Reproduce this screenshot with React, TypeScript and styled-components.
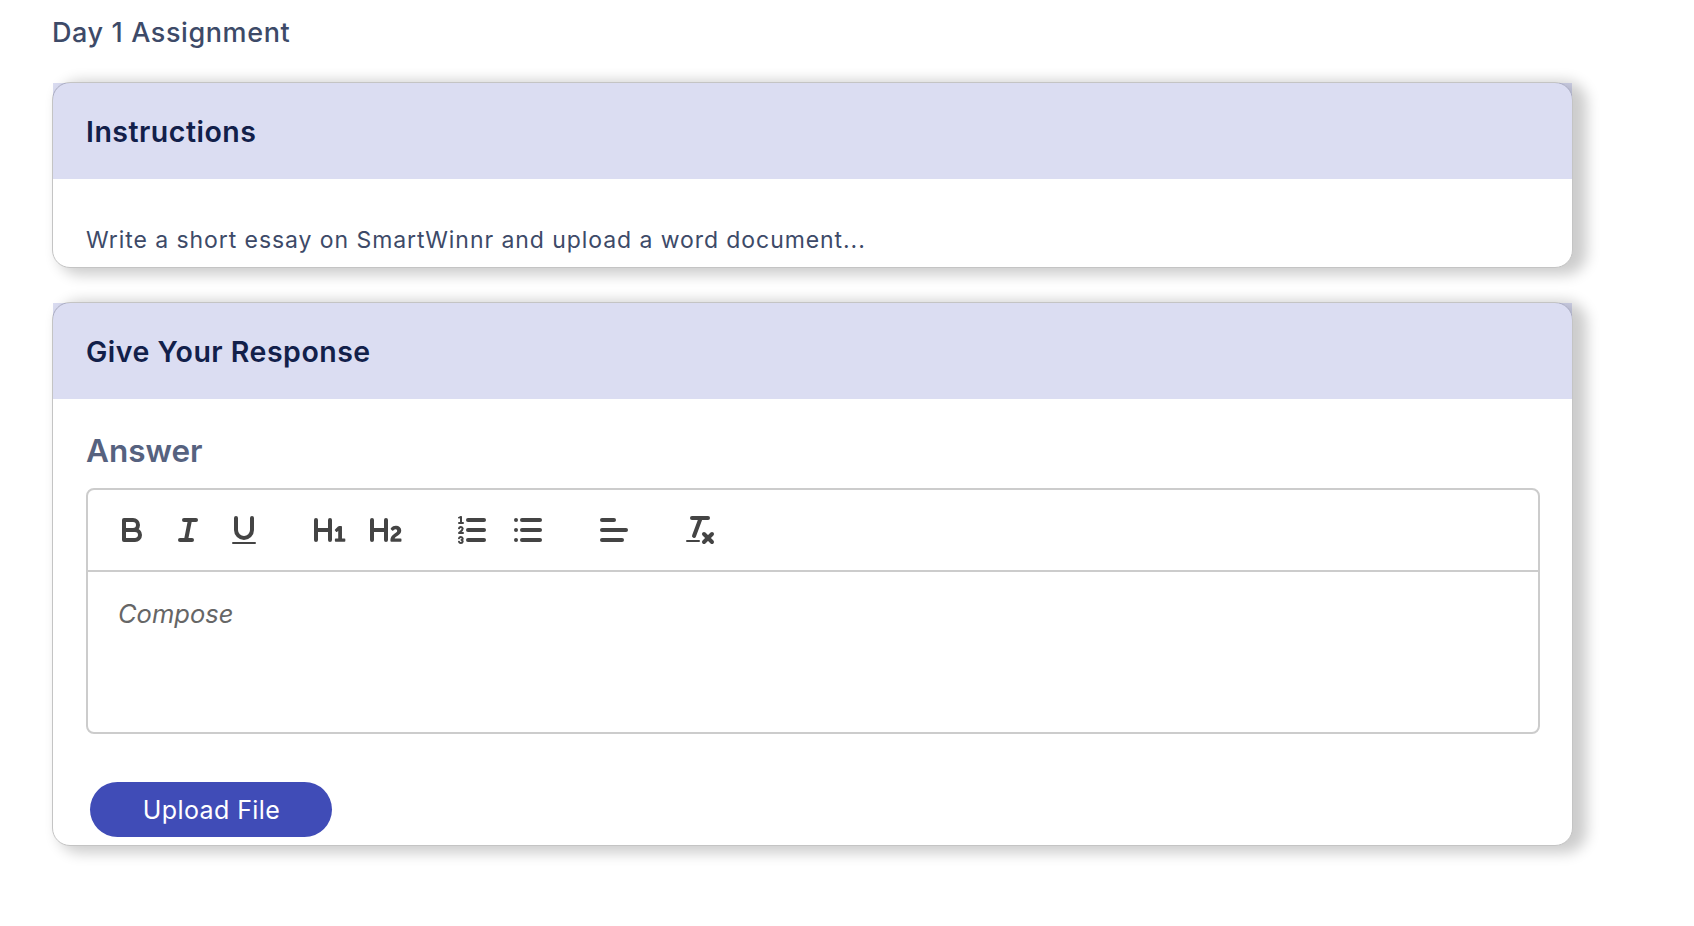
import React from "react";
import styled, { createGlobalStyle } from "styled-components";

const GlobalStyle = createGlobalStyle`
  html, body {
    margin: 0;
    padding: 0;
    background: #ffffff;
    font-family: Inter, "Liberation Sans", sans-serif;
  }
  * {
    box-sizing: border-box;
  }
`;

const Page = styled.div`
  width: 1694px;
  height: 926px;
  padding: 16px 0 0 52px;
  overflow: hidden;
`;

const Title = styled.h1`
  margin: 0 0 32px;
  font-size: 27px;
  line-height: 34px;
  font-weight: 500;
  letter-spacing: 0.6px;
  color: #3d4a68;
`;

const Card = styled.section`
  width: 1521px;
  margin-bottom: 34px;
  border: 1px solid #c4c4c4;
  border-radius: 18px;
  background: #ffffff;
  box-shadow: 10px 3px 14px 4px rgba(0, 0, 0, 0.2);
`;

const CardHeader = styled.div`
  display: flex;
  align-items: center;
  height: 96px;
  padding-left: 33px;
  background: rgba(63, 75, 184, 0.19);
  font-size: 28.5px;
  font-weight: 600;
  letter-spacing: 0.5px;
  color: #12204a;
`;

const InstructionBody = styled.p`
  margin: 0;
  height: 88px;
  padding: 46px 0 0 33px;
  font-size: 23px;
  line-height: 30px;
  letter-spacing: 0.93px;
  color: #3d4a68;
`;

const ResponseBody = styled.div`
  height: 446px;
  padding: 32px 32px 0 33px;
`;

const FieldLabel = styled.div`
  height: 40px;
  margin-bottom: 17px;
  font-size: 31.5px;
  line-height: 40px;
  font-weight: 600;
  color: #56627f;
`;

const Editor = styled.div`
  width: 1454px;
  border: 2px solid #cccccc;
  border-radius: 8px;
`;

const Toolbar = styled.div`
  display: flex;
  height: 82px;
  padding: 16px;
  border-bottom: 2px solid #cccccc;
`;

const ToolGroup = styled.div`
  display: flex;
  margin-right: 30px;
`;

const ToolButton = styled.button`
  display: flex;
  align-items: center;
  justify-content: center;
  width: 56px;
  height: 48px;
  padding: 6px 10px;
  border: 0;
  background: none;

  svg {
    width: 36px;
    height: 36px;
    fill: none;
    stroke: #444444;
    stroke-width: 2;
    stroke-linecap: round;
    stroke-linejoin: round;
  }

  .fill {
    fill: #444444;
    stroke: none;
  }

  .thin {
    stroke-width: 1;
  }
`;

const Compose = styled.div`
  height: 160px;
  padding: 24px 30px;
  font-size: 25.5px;
  line-height: 36px;
  font-style: italic;
  color: #666666;
`;

const UploadButton = styled.button`
  display: block;
  width: 242px;
  height: 55px;
  margin: 48px 0 0 3.5px;
  padding: 0 0 0 2px;
  border: 0;
  border-radius: 28px;
  background: #404cb7;
  font-family: inherit;
  font-size: 25px;
  font-weight: 400;
  letter-spacing: 0.4px;
  color: #ffffff;
`;

const BoldIcon = () => (
  <svg viewBox="0 0 18 18">
    <path d="M5,4H9.5A2.5,2.5,0,0,1,12,6.5v0A2.5,2.5,0,0,1,9.5,9H5V4Z" />
    <path d="M5,9h5.5A2.5,2.5,0,0,1,13,11.5v0A2.5,2.5,0,0,1,10.5,14H5V9Z" />
  </svg>
);

const ItalicIcon = () => (
  <svg viewBox="0 0 18 18">
    <line x1="7" x2="13" y1="4" y2="4" />
    <line x1="5" x2="11" y1="14" y2="14" />
    <line x1="8" x2="10" y1="14" y2="4" />
  </svg>
);

const UnderlineIcon = () => (
  <svg viewBox="0 0 18 18">
    <path d="M5,3V9a4.012,4.012,0,0,0,4,4H9a4.012,4.012,0,0,0,4-4V3" />
    <rect className="fill" x="3" y="15" width="12" height="1" rx="0.5" ry="0.5" />
  </svg>
);

const HeaderOneIcon = () => (
  <svg viewBox="0 0 18 18">
    <path
      className="fill"
      d="M10,4V14a1,1,0,0,1-2,0V10H3v4a1,1,0,0,1-2,0V4A1,1,0,0,1,3,4V8H8V4a1,1,0,0,1,2,0Zm6.06787,9.209H14.98975V7.59863a.54085.54085,0,0,0-.605-.60547h-.62744a1.01119,1.01119,0,0,0-.748.29688L11.645,8.56641a.5435.5435,0,0,0-.022.8584l.28613.30762a.53861.53861,0,0,0,.84717.0332l.09912-.08789a1.2137,1.2137,0,0,0,.2417-.35254h.02246s-.01123.30859-.01123.60547V13.209H12.041a.54085.54085,0,0,0-.605.60547v.43945a.54085.54085,0,0,0,.605.60547h4.02686a.54085.54085,0,0,0,.605-.60547v-.43945A.54085.54085,0,0,0,16.06787,13.209Z"
    />
  </svg>
);

const HeaderTwoIcon = () => (
  <svg viewBox="0 0 18 18">
    <path
      className="fill"
      d="M16.73975,13.81445v.43945a.54085.54085,0,0,1-.605.60547H11.855a.58392.58392,0,0,1-.64893-.60547V14.0127c0-2.90527,3.39941-3.42187,3.39941-4.55469a.77675.77675,0,0,0-.84717-.78125,1.17684,1.17684,0,0,0-.83594.38477c-.2749.26367-.561.374-.85791.13184l-.4292-.34082c-.30811-.24219-.38525-.51758-.1543-.81445a2.97155,2.97155,0,0,1,2.45361-1.17676,2.45393,2.45393,0,0,1,2.68408,2.40918c0,2.45312-3.1792,2.92676-3.27832,3.93848h2.79443A.54085.54085,0,0,1,16.73975,13.81445ZM9,3A.99974.99974,0,0,0,8,4V8H3V4A1,1,0,0,0,1,4V14a1,1,0,0,0,2,0V10H8v4a1,1,0,0,0,2,0V4A.99974.99974,0,0,0,9,3Z"
    />
  </svg>
);

const OrderedIcon = () => (
  <svg viewBox="0 0 18 18">
    <line x1="7" x2="15" y1="4" y2="4" />
    <line x1="7" x2="15" y1="9" y2="9" />
    <line x1="7" x2="15" y1="14" y2="14" />
    <line className="thin" x1="2.5" x2="4.5" y1="5.5" y2="5.5" />
    <path
      className="fill"
      d="M3.5,6A0.5,0.5,0,0,1,3,5.5V3.085l-0.276.138A0.5,0.5,0,0,1,2.053,3c-0.124-.247-0.023-0.324.224-0.447l1-.5A0.5,0.5,0,0,1,4,2.5v3A0.5,0.5,0,0,1,3.5,6Z"
    />
    <path className="thin" d="M4.5,10.5h-2c0-.234,1.85-1.076,1.85-2.234A0.959,0.959,0,0,0,2.5,8.156" />
    <path
      className="thin"
      d="M2.5,14.846a0.959,0.959,0,0,0,1.85-.109A0.7,0.7,0,0,0,3.75,14a0.688,0.688,0,0,0,.6-0.736,0.959,0.959,0,0,0-1.85-.109"
    />
  </svg>
);

const BulletIcon = () => (
  <svg viewBox="0 0 18 18">
    <line x1="6" x2="15" y1="4" y2="4" />
    <line x1="6" x2="15" y1="9" y2="9" />
    <line x1="6" x2="15" y1="14" y2="14" />
    <line x1="3" x2="3" y1="4" y2="4" />
    <line x1="3" x2="3" y1="9" y2="9" />
    <line x1="3" x2="3" y1="14" y2="14" />
  </svg>
);

const AlignIcon = () => (
  <svg viewBox="0 0 18 18">
    <line x1="3" x2="15" y1="9" y2="9" />
    <line x1="3" x2="13" y1="14" y2="14" />
    <line x1="3" x2="9" y1="4" y2="4" />
  </svg>
);

const CleanIcon = () => (
  <svg viewBox="0 0 18 18">
    <line x1="5" x2="13" y1="3" y2="3" />
    <line x1="6" x2="9.35" y1="12" y2="3" />
    <line x1="11" x2="15" y1="11" y2="15" />
    <line x1="15" x2="11" y1="11" y2="15" />
    <rect className="fill" x="2" y="14" width="7" height="1" rx="0.5" ry="0.5" />
  </svg>
);

const toolGroups = [
  [BoldIcon, ItalicIcon, UnderlineIcon],
  [HeaderOneIcon, HeaderTwoIcon],
  [OrderedIcon, BulletIcon],
  [AlignIcon],
  [CleanIcon],
];

export default function App() {
  return (
    <Page>
      <GlobalStyle />
      <Title>Day 1 Assignment</Title>
      <Card>
        <CardHeader>Instructions</CardHeader>
        <InstructionBody>Write a short essay on SmartWinnr and upload a word document...</InstructionBody>
      </Card>
      <Card>
        <CardHeader>Give Your Response</CardHeader>
        <ResponseBody>
          <FieldLabel>Answer</FieldLabel>
          <Editor>
            <Toolbar>
              {toolGroups.map((group, i) => (
                <ToolGroup key={i}>
                  {group.map((Icon, j) => (
                    <ToolButton key={j}>
                      <Icon />
                    </ToolButton>
                  ))}
                </ToolGroup>
              ))}
            </Toolbar>
            <Compose>Compose</Compose>
          </Editor>
          <UploadButton>Upload File</UploadButton>
        </ResponseBody>
      </Card>
    </Page>
  );
}
